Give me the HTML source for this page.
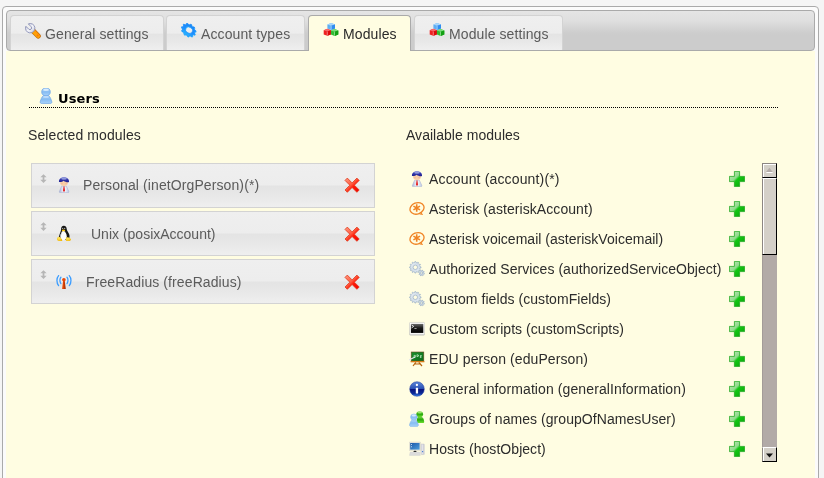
<!DOCTYPE html>
<html>
<head>
<meta charset="utf-8">
<title>LDAP Account Manager</title>
<style>
html,body{margin:0;padding:0;}
#page{position:absolute;left:0;top:0;width:824px;height:478px;overflow:hidden;will-change:transform;}
body{width:824px;height:478px;overflow:hidden;background:#f5f5f5;position:relative;font-family:"Liberation Sans",Arial,sans-serif;font-size:14px;color:#2c2c2c;letter-spacing:.1px;}
#tabs{position:absolute;left:2px;top:6px;width:815px;height:520px;border:1px solid #aaa;border-radius:4px;background:#fbfbfb;}
#nav{position:absolute;left:6px;top:10px;width:807px;height:39px;border:1px solid #aaa;border-radius:4px;background:linear-gradient(#e5e5e5 0%,#dfdfdf 25%,#cecece 55%,#cccccc 62%,#cccccc 100%);}
#panel{position:absolute;left:6px;top:51px;width:809px;height:480px;background:#fffde2;}
.tab{position:absolute;top:15px;height:35px;box-sizing:border-box;border:1px solid #d3d3d3;border-bottom:0;border-radius:4px 4px 0 0;background:linear-gradient(#efefef 0%,#ededed 50%,#e4e4e4 54%,#e8e8e8 75%,#efefef 100%);color:#5b5b5b;white-space:nowrap;}
.tab.active{background:#fffde2;border-color:#aaa;color:#2a2a2a;height:36px;}
.tab svg{position:absolute;left:14px;top:7px;width:16px;height:16px;}
.tab span{position:absolute;left:34px;top:10px;line-height:16px;}
.hdr{position:absolute;left:58px;top:91px;font:bold 13px "DejaVu Sans",Verdana,sans-serif;line-height:16px;color:#000;}
.hdric{position:absolute;left:38px;top:88px;width:16px;height:16px;}
.dots{position:absolute;left:29px;top:107px;width:749px;height:1px;background:repeating-linear-gradient(90deg,#000 0,#000 1px,transparent 1px,transparent 2px);}
.lbl{position:absolute;top:127px;line-height:16px;color:#2c2c2c;}
.sel{position:absolute;left:31px;width:344px;height:45px;box-sizing:border-box;border:1px solid #d3d3d3;background:linear-gradient(#efefef 0%,#ededed 48%,#e4e4e4 52%,#e8e8e8 75%,#efefef 100%);color:#5b5b5b;}
.sel .t{position:absolute;top:13px;line-height:16px;white-space:nowrap;}
.sel svg.ic{position:absolute;left:24px;top:13px;width:16px;height:16px;}
.sel svg.del{position:absolute;left:312px;top:13px;width:16px;height:16px;}
.sel svg.mv{position:absolute;left:7.5px;top:9.6px;width:7px;height:9.2px;}
.row{position:absolute;left:409px;height:16px;line-height:16px;white-space:nowrap;color:#2c2c2c;}
.row svg{position:absolute;left:0;top:0;width:16px;height:16px;}
.row span{position:absolute;left:20px;top:0;}
.row svg.add{left:320px;}
#sb{position:absolute;left:762px;top:163px;width:15px;height:299px;background:#b2aaa7;box-shadow:inset 1px 0 0 #a39b98;}
#sb div{position:absolute;left:0;width:15px;box-sizing:border-box;background:#d4d0c8;border:1px solid #000;border-left-color:#8c8682;border-top-color:#8c8682;box-shadow:inset 1px 1px 0 #fff;}
#sb svg{position:absolute;left:0;top:0;width:15px;height:15px;}
</style>
</head>
<body>
<div id="page">

<svg width="0" height="0" style="position:absolute">
<defs>
<linearGradient id="g-silver" x1="0" y1="0" x2="1" y2="1"><stop offset="0" stop-color="#b9bdd6"/><stop offset=".5" stop-color="#f4f5fa"/><stop offset="1" stop-color="#c4c8dc"/></linearGradient>
<linearGradient id="g-orange" x1="0" y1="1" x2="1" y2="0"><stop offset="0" stop-color="#ffb400"/><stop offset="1" stop-color="#ff8a10"/></linearGradient>
<linearGradient id="g-bluegear" x1="0" y1="0" x2="0" y2="1"><stop offset="0" stop-color="#1c86f4"/><stop offset=".6" stop-color="#1e90ff"/><stop offset="1" stop-color="#2cc0ff"/></linearGradient>
<linearGradient id="g-cb" x1="0" y1="0" x2="0" y2="1"><stop offset="0" stop-color="#9ed0fa"/><stop offset=".35" stop-color="#5aacf2"/><stop offset="1" stop-color="#2a86ee"/></linearGradient>
<linearGradient id="g-cr" x1="0" y1="0" x2="0" y2="1"><stop offset="0" stop-color="#f46060"/><stop offset=".35" stop-color="#ec1a1a"/><stop offset="1" stop-color="#d80808"/></linearGradient>
<linearGradient id="g-cg" x1="0" y1="0" x2="0" y2="1"><stop offset="0" stop-color="#70d870"/><stop offset=".35" stop-color="#2cb82c"/><stop offset="1" stop-color="#109810"/></linearGradient>
<linearGradient id="g-user" x1="0" y1="0" x2="0" y2="1"><stop offset="0" stop-color="#bcdcfa"/><stop offset=".5" stop-color="#86bcf2"/><stop offset="1" stop-color="#a8d2fa"/></linearGradient>
<linearGradient id="g-userg" x1="0" y1="0" x2="0" y2="1"><stop offset="0" stop-color="#7ad84a"/><stop offset=".5" stop-color="#28a80c"/><stop offset="1" stop-color="#6ee030"/></linearGradient>
<linearGradient id="g-hair" x1="0" y1="0" x2="0" y2="1"><stop offset="0" stop-color="#6a74d0"/><stop offset=".45" stop-color="#3236aa"/><stop offset="1" stop-color="#20208e"/></linearGradient>
<linearGradient id="g-shirt" x1="0" y1="0" x2="1" y2="0"><stop offset="0" stop-color="#a8b0d4"/><stop offset=".35" stop-color="#e4e8f4"/><stop offset=".65" stop-color="#e8f0f8"/><stop offset="1" stop-color="#b8c4e0"/></linearGradient>
<linearGradient id="g-x" x1="0" y1="0" x2="1" y2="1"><stop offset="0" stop-color="#ff9a80"/><stop offset=".45" stop-color="#ff5a40"/><stop offset=".6" stop-color="#ff1a08"/><stop offset="1" stop-color="#f00000"/></linearGradient>
<linearGradient id="g-plus" x1="0" y1="0" x2="1" y2="1"><stop offset="0" stop-color="#c4ecbc"/><stop offset=".42" stop-color="#90da8c"/><stop offset=".52" stop-color="#14c814"/><stop offset="1" stop-color="#0c9c0c"/></linearGradient>
<linearGradient id="g-gear" x1="0" y1="0" x2="1" y2="1"><stop offset="0" stop-color="#eef3f8"/><stop offset=".5" stop-color="#d2dde9"/><stop offset="1" stop-color="#e6edf4"/></linearGradient>
<linearGradient id="g-scr" x1="0" y1="0" x2="0" y2="1"><stop offset="0" stop-color="#6a6a6a"/><stop offset=".45" stop-color="#1a1a1a"/><stop offset="1" stop-color="#000"/></linearGradient>
<linearGradient id="g-frame" x1="0" y1="0" x2="0" y2="1"><stop offset="0" stop-color="#f4f4f4"/><stop offset="1" stop-color="#d4d4d4"/></linearGradient>
<linearGradient id="g-board" x1="0" y1="0" x2="1" y2="1"><stop offset="0" stop-color="#18902c"/><stop offset="1" stop-color="#0c6a1c"/></linearGradient>
<linearGradient id="g-info" x1="0" y1="0" x2="0" y2="1"><stop offset="0" stop-color="#5a86d8"/><stop offset=".48" stop-color="#2a50b4"/><stop offset=".52" stop-color="#08127c"/><stop offset=".8" stop-color="#0c2a98"/><stop offset="1" stop-color="#3c8cf0"/></linearGradient>
<linearGradient id="g-mon" x1="0" y1="0" x2="1" y2="1"><stop offset="0" stop-color="#1c58a8"/><stop offset="1" stop-color="#4c9cdc"/></linearGradient>
<linearGradient id="g-tower" x1="0" y1="0" x2="1" y2="0"><stop offset="0" stop-color="#e8e8ee"/><stop offset=".5" stop-color="#c4c4cc"/><stop offset="1" stop-color="#e0e0e6"/></linearGradient>
<linearGradient id="g-ant" x1="0" y1="0" x2="1" y2="0"><stop offset="0" stop-color="#f05a10"/><stop offset=".5" stop-color="#d83c00"/><stop offset="1" stop-color="#8a2400"/></linearGradient>
<radialGradient id="g-foot" cx=".4" cy=".3" r=".8"><stop offset="0" stop-color="#ffe860"/><stop offset="1" stop-color="#f0b000"/></radialGradient>


</defs>
</svg>

<div id="tabs"></div><div id="nav"></div><div id="panel"></div>
<div class="tab" style="left:10px;width:154px;"><svg viewBox="0 0 16 16"><line x1="8.4" y1="8.2" x2="13.2" y2="13" stroke="#c46c08" stroke-width="5.2" stroke-linecap="round"/>
<line x1="8.4" y1="8.2" x2="13.2" y2="13" stroke="url(#g-orange)" stroke-width="3.8" stroke-linecap="round"/>
<circle cx="12.6" cy="12.6" r="1" fill="#ff7a00"/>
<path d="M3.3 .9A4.7 4.7 0 1 1 .9 3.3L3.79 6.19A1.7 1.7 0 0 0 6.19 3.79Z" fill="url(#g-silver)" stroke="#8a90b6" stroke-width=".9" stroke-linejoin="round"/></svg><span>General settings</span></div>
<div class="tab" style="left:166px;width:139px;"><svg viewBox="0 0 16 16"><g transform="translate(7.9 7.6) rotate(35) scale(1 .8)"><path d="M6.42 -1.02 L7.67 -0.68 L7.67 0.68 L6.42 1.02 L5.95 2.62 L6.82 3.57 L6.08 4.72 L4.85 4.33 L3.59 5.42 L3.81 6.69 L2.57 7.26 L1.74 6.26 L0.09 6.50 L-0.42 7.69 L-1.77 7.49 L-1.92 6.21 L-3.44 5.52 L-4.51 6.24 L-5.54 5.35 L-4.97 4.19 L-5.87 2.78 L-7.17 2.81 L-7.55 1.51 L-6.45 0.83 L-6.45 -0.83 L-7.55 -1.51 L-7.17 -2.81 L-5.87 -2.78 L-4.97 -4.19 L-5.54 -5.35 L-4.51 -6.24 L-3.44 -5.52 L-1.92 -6.21 L-1.77 -7.49 L-0.42 -7.69 L0.09 -6.50 L1.74 -6.26 L2.57 -7.26 L3.81 -6.69 L3.59 -5.42 L4.85 -4.33 L6.08 -4.72 L6.82 -3.57 L5.95 -2.62ZM-3.60 -0.40 a3.90 3.90 0 1 0 7.80 0 a3.90 3.90 0 1 0 -7.80 0Z" fill="#38b8ff" fill-rule="evenodd" stroke="#38b8ff" stroke-width=".6" stroke-linejoin="round"/></g>
<g transform="translate(7.5 7) rotate(35) scale(1 .8)"><path d="M6.42 -1.02 L7.67 -0.68 L7.67 0.68 L6.42 1.02 L5.95 2.62 L6.82 3.57 L6.08 4.72 L4.85 4.33 L3.59 5.42 L3.81 6.69 L2.57 7.26 L1.74 6.26 L0.09 6.50 L-0.42 7.69 L-1.77 7.49 L-1.92 6.21 L-3.44 5.52 L-4.51 6.24 L-5.54 5.35 L-4.97 4.19 L-5.87 2.78 L-7.17 2.81 L-7.55 1.51 L-6.45 0.83 L-6.45 -0.83 L-7.55 -1.51 L-7.17 -2.81 L-5.87 -2.78 L-4.97 -4.19 L-5.54 -5.35 L-4.51 -6.24 L-3.44 -5.52 L-1.92 -6.21 L-1.77 -7.49 L-0.42 -7.69 L0.09 -6.50 L1.74 -6.26 L2.57 -7.26 L3.81 -6.69 L3.59 -5.42 L4.85 -4.33 L6.08 -4.72 L6.82 -3.57 L5.95 -2.62ZM-3.60 -0.40 a3.90 3.90 0 1 0 7.80 0 a3.90 3.90 0 1 0 -7.80 0Z" fill="url(#g-bluegear)" fill-rule="evenodd" stroke="#1e8cfa" stroke-width=".6" stroke-linejoin="round"/></g></svg><span>Account types</span></div>
<div class="tab active" style="left:308px;width:103px;"><svg viewBox="0 0 16 16"><path d="M8.2 0L12.0 1.4000000000000001V5.6L8.2 7L4.3999999999999995 5.6V1.4000000000000001Z" fill="#5eaef3"/><path d="M8.2 0L12.0 1.4000000000000001L8.2 2.8000000000000003L4.3999999999999995 1.4000000000000001Z" fill="#a8d6fb"/><path d="M8.2 2.8000000000000003L12.0 1.4000000000000001V5.6L8.2 7Z" fill="#2f8cf0"/><path d="M8.2 2.8000000000000003V6.7" stroke="#d8ecff" stroke-width=".7" opacity=".8"/><path d="M4.3 5.8L7.9 7.2V11.4L4.3 12.8L0.6999999999999997 11.4V7.2Z" fill="#ee2222"/><path d="M4.3 5.8L7.9 7.2L4.3 8.6L0.6999999999999997 7.2Z" fill="#f66a6a"/><path d="M4.3 8.6L7.9 7.2V11.4L4.3 12.8Z" fill="#dc0a0a"/><path d="M4.3 8.6V12.5" stroke="#ffd0d0" stroke-width=".7" opacity=".8"/><path d="M11.6 6L15.3 7.4V11.6L11.6 13L7.8999999999999995 11.6V7.4Z" fill="#34bc34"/><path d="M11.6 6L15.3 7.4L11.6 8.8L7.8999999999999995 7.4Z" fill="#7adc7a"/><path d="M11.6 8.8L15.3 7.4V11.6L11.6 13Z" fill="#14a014"/><path d="M11.6 8.8V12.7" stroke="#d8ffd8" stroke-width=".7" opacity=".8"/></svg><span>Modules</span></div>
<div class="tab" style="left:414px;width:149px;"><svg viewBox="0 0 16 16"><path d="M8.2 0L12.0 1.4000000000000001V5.6L8.2 7L4.3999999999999995 5.6V1.4000000000000001Z" fill="#5eaef3"/><path d="M8.2 0L12.0 1.4000000000000001L8.2 2.8000000000000003L4.3999999999999995 1.4000000000000001Z" fill="#a8d6fb"/><path d="M8.2 2.8000000000000003L12.0 1.4000000000000001V5.6L8.2 7Z" fill="#2f8cf0"/><path d="M8.2 2.8000000000000003V6.7" stroke="#d8ecff" stroke-width=".7" opacity=".8"/><path d="M4.3 5.8L7.9 7.2V11.4L4.3 12.8L0.6999999999999997 11.4V7.2Z" fill="#ee2222"/><path d="M4.3 5.8L7.9 7.2L4.3 8.6L0.6999999999999997 7.2Z" fill="#f66a6a"/><path d="M4.3 8.6L7.9 7.2V11.4L4.3 12.8Z" fill="#dc0a0a"/><path d="M4.3 8.6V12.5" stroke="#ffd0d0" stroke-width=".7" opacity=".8"/><path d="M11.6 6L15.3 7.4V11.6L11.6 13L7.8999999999999995 11.6V7.4Z" fill="#34bc34"/><path d="M11.6 6L15.3 7.4L11.6 8.8L7.8999999999999995 7.4Z" fill="#7adc7a"/><path d="M11.6 8.8L15.3 7.4V11.6L11.6 13Z" fill="#14a014"/><path d="M11.6 8.8V12.7" stroke="#d8ffd8" stroke-width=".7" opacity=".8"/></svg><span>Module settings</span></div>
<svg class="hdric" viewBox="0 0 16 16"><path d="M8 6.8C5.5 6.8 4.2 8.6 3.4 10.4C2.6 12.2 2 13.6 2.2 14.4C2.4 15.4 3.2 15.6 4.2 15.6H11.8C12.8 15.6 13.6 15.4 13.8 14.4C14 13.6 13.4 12.2 12.6 10.4C11.8 8.6 10.5 6.8 8 6.8Z" fill="url(#g-user)" stroke="#6aa4e6" stroke-width=".7"/>
<ellipse cx="8" cy="3.9" rx="4.3" ry="3.8" fill="url(#g-user)" stroke="#6aa4e6" stroke-width=".7"/>
<ellipse cx="8" cy="1.9" rx="2.8" ry="1.1" fill="#e4f2fe" opacity=".8"/>
<ellipse cx="8" cy="9" rx="3" ry="1" fill="#d4e8fc" opacity=".6"/></svg><div class="hdr">Users</div><div class="dots"></div>
<div class="lbl" style="left:28px;">Selected modules</div><div class="lbl" style="left:406px;letter-spacing:.03px;">Available modules</div>
<div class="sel" style="top:163px;"><svg class="mv" viewBox="0 0 8 10"><path d="M4 0L7.6 3.6H5V6.4H7.6L4 10L.4 6.4H3V3.6H.4Z" fill="#b6b6b6"/></svg><svg class="ic" viewBox="0 0 16 16"><path d="M5.6 9.2L3.4 14.4C3.2 15.2 3.5 15.6 4.3 15.6H11.9C12.7 15.6 13 15.2 12.8 14.4L10.4 9.2Z" fill="url(#g-shirt)" stroke="#a4acd0" stroke-width=".5"/>
<path d="M7.6 9.2H8.4L9 13.4L8 15.2L7 13.4Z" fill="#e62424"/>
<ellipse cx="8" cy="5.1" rx="4.1" ry="3.9" fill="#f8cfa8"/>
<ellipse cx="6" cy="6.6" rx="1" ry=".6" fill="#f4a890" opacity=".6"/><ellipse cx="10" cy="6.6" rx="1" ry=".6" fill="#f4a890" opacity=".6"/>
<path d="M3 5C2.6 1.9 5 .2 8 .2C11 .2 13.4 1.9 13 5C11.6 5.6 9.4 5.2 7.6 3.8C6.8 4.6 5 5.2 3 5Z" fill="url(#g-hair)"/>
<ellipse cx="8" cy="1.7" rx="2.8" ry="1" fill="#a4acE4" opacity=".8"/></svg><span class="t" style="left:51px;top:13px;">Personal (inetOrgPerson)(*)</span><svg class="del" style="top:13px;" viewBox="0 0 16 16"><path transform="translate(0 .4)" d="M3.3 .7L8.1 5.5L12.9 .7L15.2 3L10.4 7.8L15.2 12.6L12.9 14.9L8.1 10.1L3.3 14.9L1 12.6L5.8 7.8L1 3Z" fill="url(#g-x)" stroke="#e03a1c" stroke-width=".8" stroke-linejoin="round"/></svg></div>
<div class="sel" style="top:211px;"><svg class="mv" viewBox="0 0 8 10"><path d="M4 0L7.6 3.6H5V6.4H7.6L4 10L.4 6.4H3V3.6H.4Z" fill="#b6b6b6"/></svg><svg class="ic" viewBox="0 0 16 16"><path d="M7.8 .8C9.7 .8 10.7 2.2 10.7 4C10.7 5.6 12.8 7.6 13.4 10C13.8 12 13.2 14 12.2 15H3.8C2.8 14 2.6 12 3.4 10C4.2 7.6 5.1 6 5.1 4C5.1 2.2 5.9 .8 7.8 .8Z" fill="#161616"/>
<path d="M7.4 5.6C5.6 6.6 4.2 9.6 4.3 12C4.4 14 5.6 15.2 7.4 15.2C9.4 15.2 10.8 14 10.8 11.6C10.8 9.2 9.4 6.6 7.4 5.6Z" fill="#fcfcfc"/>
<path d="M4.3 12C4.3 10 5 8 6 6.8L5.4 9.6Z" fill="#c8c8c8"/>
<ellipse cx="7.5" cy="5.4" rx="1.7" ry=".95" fill="#f4c010"/>
<ellipse cx="6.7" cy="3.4" rx=".55" ry=".7" fill="#c8c8c8"/><ellipse cx="8.7" cy="3.4" rx=".55" ry=".7" fill="#c8c8c8"/>
<path d="M1 13.4C1.6 11.6 3.2 11.4 4.4 12.4C5.6 13.4 6.4 14.6 6.2 15.6C6 16.6 4 16.4 2.6 16C1.2 15.6 .6 14.6 1 13.4Z" fill="url(#g-foot)"/>
<path d="M9.8 13.4C10.2 12 11.6 11.8 12.8 12.6C14 13.4 15.2 14 15 14.8C14.6 15.8 13 16.4 11.4 16.4C10 16.4 9.6 15 9.8 13.4Z" fill="url(#g-foot)"/></svg><span class="t" style="left:59px;top:14px;letter-spacing:0;">Unix (posixAccount)</span><svg class="del" style="top:14px;" viewBox="0 0 16 16"><path transform="translate(0 .4)" d="M3.3 .7L8.1 5.5L12.9 .7L15.2 3L10.4 7.8L15.2 12.6L12.9 14.9L8.1 10.1L3.3 14.9L1 12.6L5.8 7.8L1 3Z" fill="url(#g-x)" stroke="#e03a1c" stroke-width=".8" stroke-linejoin="round"/></svg></div>
<div class="sel" style="top:259px;"><svg class="mv" viewBox="0 0 8 10"><path d="M4 0L7.6 3.6H5V6.4H7.6L4 10L.4 6.4H3V3.6H.4Z" fill="#b6b6b6"/></svg><svg class="ic" viewBox="0 0 16 16"><path d="M7.1 7.6L6 16.4H9.8L8.7 7.6Z" fill="url(#g-ant)"/>
<circle cx="7.9" cy="6.8" r="1.8" fill="#e84808"/>
<g fill="none" stroke="#3a9cff" stroke-width="1.3" stroke-linecap="round">
<path d="M4.9 4.2C3.6 5.6 3.6 9 4.9 10.6"/><path d="M2.6 2.6C.4 5 .4 10 2.6 12.6"/>
<path d="M11 4.2C12.3 5.6 12.3 9 11 10.6"/><path d="M13.3 2.6C15.5 5 15.5 10 13.3 12.6"/>
</g></svg><span class="t" style="left:54px;top:14px;">FreeRadius (freeRadius)</span><svg class="del" style="top:14px;" viewBox="0 0 16 16"><path transform="translate(0 .4)" d="M3.3 .7L8.1 5.5L12.9 .7L15.2 3L10.4 7.8L15.2 12.6L12.9 14.9L8.1 10.1L3.3 14.9L1 12.6L5.8 7.8L1 3Z" fill="url(#g-x)" stroke="#e03a1c" stroke-width=".8" stroke-linejoin="round"/></svg></div>
<div class="row" style="top:171px;"><svg viewBox="0 0 16 16"><path d="M5.6 9.2L3.4 14.4C3.2 15.2 3.5 15.6 4.3 15.6H11.9C12.7 15.6 13 15.2 12.8 14.4L10.4 9.2Z" fill="url(#g-shirt)" stroke="#a4acd0" stroke-width=".5"/>
<path d="M7.6 9.2H8.4L9 13.4L8 15.2L7 13.4Z" fill="#e62424"/>
<ellipse cx="8" cy="5.1" rx="4.1" ry="3.9" fill="#f8cfa8"/>
<ellipse cx="6" cy="6.6" rx="1" ry=".6" fill="#f4a890" opacity=".6"/><ellipse cx="10" cy="6.6" rx="1" ry=".6" fill="#f4a890" opacity=".6"/>
<path d="M3 5C2.6 1.9 5 .2 8 .2C11 .2 13.4 1.9 13 5C11.6 5.6 9.4 5.2 7.6 3.8C6.8 4.6 5 5.2 3 5Z" fill="url(#g-hair)"/>
<ellipse cx="8" cy="1.7" rx="2.8" ry="1" fill="#a4acE4" opacity=".8"/></svg><span style="letter-spacing:0.15px">Account (account)(*)</span><svg class="add" viewBox="0 0 16 16"><path d="M5.4 .4H10.6V5.4H15.6V10.6H10.6V15.6H5.4V10.6H.4V5.4H5.4Z" fill="url(#g-plus)" stroke="#22a822" stroke-width=".8" stroke-linejoin="round"/></svg></div>
<div class="row" style="top:201px;"><svg viewBox="0 0 16 16"><g fill="none" stroke="#f08424" stroke-linecap="round">
<ellipse cx="8" cy="7.4" rx="7.2" ry="5.6" transform="rotate(-22 8 7.4)" stroke-width="1.3"/>
<path d="M12 12L13.6 13.4L11 13" stroke-width="1"/>
<path d="M7.7 3.2V10.8M4.4 5.1L11 8.9M4.4 8.9L11 5.1" stroke-width="1.6" stroke-linecap="butt"/>
</g></svg><span style="letter-spacing:0.07px">Asterisk (asteriskAccount)</span><svg class="add" viewBox="0 0 16 16"><path d="M5.4 .4H10.6V5.4H15.6V10.6H10.6V15.6H5.4V10.6H.4V5.4H5.4Z" fill="url(#g-plus)" stroke="#22a822" stroke-width=".8" stroke-linejoin="round"/></svg></div>
<div class="row" style="top:231px;"><svg viewBox="0 0 16 16"><g fill="none" stroke="#f08424" stroke-linecap="round">
<ellipse cx="8" cy="7.4" rx="7.2" ry="5.6" transform="rotate(-22 8 7.4)" stroke-width="1.3"/>
<path d="M12 12L13.6 13.4L11 13" stroke-width="1"/>
<path d="M7.7 3.2V10.8M4.4 5.1L11 8.9M4.4 8.9L11 5.1" stroke-width="1.6" stroke-linecap="butt"/>
</g></svg><span style="letter-spacing:0.02px">Asterisk voicemail (asteriskVoicemail)</span><svg class="add" viewBox="0 0 16 16"><path d="M5.4 .4H10.6V5.4H15.6V10.6H10.6V15.6H5.4V10.6H.4V5.4H5.4Z" fill="url(#g-plus)" stroke="#22a822" stroke-width=".8" stroke-linejoin="round"/></svg></div>
<div class="row" style="top:261px;"><svg viewBox="0 0 16 16"><path d="M11.06 5.67 L12.09 5.91 L12.09 6.69 L11.06 6.93 L10.73 8.14 L11.51 8.85 L11.11 9.53 L10.11 9.22 L9.22 10.11 L9.53 11.11 L8.85 11.51 L8.14 10.73 L6.93 11.06 L6.69 12.09 L5.91 12.09 L5.67 11.06 L4.46 10.73 L3.75 11.51 L3.07 11.11 L3.38 10.11 L2.49 9.22 L1.49 9.53 L1.09 8.85 L1.87 8.14 L1.54 6.93 L0.51 6.69 L0.51 5.91 L1.54 5.67 L1.87 4.46 L1.09 3.75 L1.49 3.07 L2.49 3.38 L3.38 2.49 L3.07 1.49 L3.75 1.09 L4.46 1.87 L5.67 1.54 L5.91 0.51 L6.69 0.51 L6.93 1.54 L8.14 1.87 L8.85 1.09 L9.53 1.49 L9.22 2.49 L10.11 3.38 L11.11 3.07 L11.51 3.75 L10.73 4.46ZM4.10 6.30 a2.20 2.20 0 1 0 4.40 0 a2.20 2.20 0 1 0 -4.40 0Z" fill="url(#g-gear)" fill-rule="evenodd" stroke="#8fa6c0" stroke-width=".6"/>
<path d="M14.79 12.23 L15.44 12.57 L15.27 13.13 L14.53 13.05 L13.99 13.71 L14.21 14.41 L13.68 14.69 L13.23 14.11 L12.37 14.19 L12.03 14.84 L11.47 14.67 L11.55 13.93 L10.89 13.39 L10.19 13.61 L9.91 13.08 L10.49 12.63 L10.41 11.77 L9.76 11.43 L9.93 10.87 L10.67 10.95 L11.21 10.29 L10.99 9.59 L11.52 9.31 L11.97 9.89 L12.83 9.81 L13.17 9.16 L13.73 9.33 L13.65 10.07 L14.31 10.61 L15.01 10.39 L15.29 10.92 L14.71 11.37ZM11.50 12.00 a1.10 1.10 0 1 0 2.20 0 a1.10 1.10 0 1 0 -2.20 0Z" fill="url(#g-gear)" fill-rule="evenodd" stroke="#8fa6c0" stroke-width=".6"/></svg><span style="letter-spacing:0.05px">Authorized Services (authorizedServiceObject)</span><svg class="add" viewBox="0 0 16 16"><path d="M5.4 .4H10.6V5.4H15.6V10.6H10.6V15.6H5.4V10.6H.4V5.4H5.4Z" fill="url(#g-plus)" stroke="#22a822" stroke-width=".8" stroke-linejoin="round"/></svg></div>
<div class="row" style="top:291px;"><svg viewBox="0 0 16 16"><path d="M11.06 5.67 L12.09 5.91 L12.09 6.69 L11.06 6.93 L10.73 8.14 L11.51 8.85 L11.11 9.53 L10.11 9.22 L9.22 10.11 L9.53 11.11 L8.85 11.51 L8.14 10.73 L6.93 11.06 L6.69 12.09 L5.91 12.09 L5.67 11.06 L4.46 10.73 L3.75 11.51 L3.07 11.11 L3.38 10.11 L2.49 9.22 L1.49 9.53 L1.09 8.85 L1.87 8.14 L1.54 6.93 L0.51 6.69 L0.51 5.91 L1.54 5.67 L1.87 4.46 L1.09 3.75 L1.49 3.07 L2.49 3.38 L3.38 2.49 L3.07 1.49 L3.75 1.09 L4.46 1.87 L5.67 1.54 L5.91 0.51 L6.69 0.51 L6.93 1.54 L8.14 1.87 L8.85 1.09 L9.53 1.49 L9.22 2.49 L10.11 3.38 L11.11 3.07 L11.51 3.75 L10.73 4.46ZM4.10 6.30 a2.20 2.20 0 1 0 4.40 0 a2.20 2.20 0 1 0 -4.40 0Z" fill="url(#g-gear)" fill-rule="evenodd" stroke="#8fa6c0" stroke-width=".6"/>
<path d="M14.79 12.23 L15.44 12.57 L15.27 13.13 L14.53 13.05 L13.99 13.71 L14.21 14.41 L13.68 14.69 L13.23 14.11 L12.37 14.19 L12.03 14.84 L11.47 14.67 L11.55 13.93 L10.89 13.39 L10.19 13.61 L9.91 13.08 L10.49 12.63 L10.41 11.77 L9.76 11.43 L9.93 10.87 L10.67 10.95 L11.21 10.29 L10.99 9.59 L11.52 9.31 L11.97 9.89 L12.83 9.81 L13.17 9.16 L13.73 9.33 L13.65 10.07 L14.31 10.61 L15.01 10.39 L15.29 10.92 L14.71 11.37ZM11.50 12.00 a1.10 1.10 0 1 0 2.20 0 a1.10 1.10 0 1 0 -2.20 0Z" fill="url(#g-gear)" fill-rule="evenodd" stroke="#8fa6c0" stroke-width=".6"/></svg><span style="letter-spacing:0.055px">Custom fields (customFields)</span><svg class="add" viewBox="0 0 16 16"><path d="M5.4 .4H10.6V5.4H15.6V10.6H10.6V15.6H5.4V10.6H.4V5.4H5.4Z" fill="url(#g-plus)" stroke="#22a822" stroke-width=".8" stroke-linejoin="round"/></svg></div>
<div class="row" style="top:321px;"><svg viewBox="0 0 16 16"><rect x=".4" y="1.4" width="15.3" height="12.9" rx="1.2" fill="url(#g-frame)" stroke="#c8c8c0" stroke-width=".6"/>
<rect x="1.5" y="2.5" width="13.2" height="9.8" fill="none" stroke="#fff" stroke-width=".8"/>
<rect x="1.9" y="2.9" width="12.4" height="9" fill="url(#g-scr)"/>
<path d="M2.6 3.9L4.7 5.4L2.6 6.9" fill="none" stroke="#f0f0f0" stroke-width=".9"/>
<rect x="5.4" y="7.2" width="2.2" height=".8" fill="#bbb"/></svg><span style="letter-spacing:0.04px">Custom scripts (customScripts)</span><svg class="add" viewBox="0 0 16 16"><path d="M5.4 .4H10.6V5.4H15.6V10.6H10.6V15.6H5.4V10.6H.4V5.4H5.4Z" fill="url(#g-plus)" stroke="#22a822" stroke-width=".8" stroke-linejoin="round"/></svg></div>
<div class="row" style="top:351px;"><svg viewBox="0 0 16 16"><rect x="2.2" y="1" width="12.6" height="9" fill="url(#g-board)" stroke="#6a4a20" stroke-width=".6"/>
<rect x="1.6" y="10" width="13.8" height="1.3" fill="#d87c18"/>
<path d="M6.8 11.3L4 15M9.8 11.3L13 15M5 13H12" stroke="#b8640c" stroke-width="1.2" fill="none"/>
<path d="M5 4.4H6.4V6.2H5ZM8 3.6L10 4.6L8 5.8ZM11.2 4.6H12.8M11.2 6H12.8M11.4 4.6V7" stroke="#c8f0c8" stroke-width=".7" fill="none"/>
<path d="M.2 8.8L5.6 6.2" stroke="#e4e4ec" stroke-width="1.2" stroke-linecap="round"/></svg><span style="letter-spacing:0.085px">EDU person (eduPerson)</span><svg class="add" viewBox="0 0 16 16"><path d="M5.4 .4H10.6V5.4H15.6V10.6H10.6V15.6H5.4V10.6H.4V5.4H5.4Z" fill="url(#g-plus)" stroke="#22a822" stroke-width=".8" stroke-linejoin="round"/></svg></div>
<div class="row" style="top:381px;"><svg viewBox="0 0 16 16"><circle cx="8" cy="8" r="7.3" fill="url(#g-info)" stroke="#20389c" stroke-width=".5"/>
<circle cx="7.9" cy="4" r="1.15" fill="#fff"/>
<rect x="6.8" y="6.7" width="2.3" height="5.9" rx=".4" fill="#fff"/></svg><span style="letter-spacing:0.1px">General information (generalInformation)</span><svg class="add" viewBox="0 0 16 16"><path d="M5.4 .4H10.6V5.4H15.6V10.6H10.6V15.6H5.4V10.6H.4V5.4H5.4Z" fill="url(#g-plus)" stroke="#22a822" stroke-width=".8" stroke-linejoin="round"/></svg></div>
<div class="row" style="top:411px;"><svg viewBox="0 0 16 16"><path d="M10.7 5.4C9 5.4 8.2 6.6 7.9 8L7.6 10.8C7.5 11.6 8 12 8.8 12H14C14.8 12 15.3 11.6 15.2 10.8L14.6 8C14.2 6.6 12.6 5.4 10.7 5.4Z" fill="url(#g-userg)"/>
<ellipse cx="10.7" cy="3.2" rx="3.4" ry="3" fill="url(#g-userg)"/>
<ellipse cx="10.7" cy="1.5" rx="2.2" ry=".9" fill="#b8f088" opacity=".7"/>
<path d="M4.9 8.4C3 8.4 2 9.8 1.4 11.2C.8 12.6 .4 13.6 .5 14.2C.6 15.2 1.2 15.4 2 15.4H7.8C8.6 15.4 9.3 15.2 9.4 14.2C9.5 13.6 9 12.6 8.4 11.2C7.8 9.8 6.8 8.4 4.9 8.4Z" fill="url(#g-user)" stroke="#78aeea" stroke-width=".5"/>
<ellipse cx="4.9" cy="6.1" rx="3.3" ry="3.1" fill="url(#g-user)" stroke="#78aeea" stroke-width=".5"/>
<ellipse cx="4.9" cy="4.5" rx="2.1" ry=".9" fill="#e4f2fe" opacity=".8"/></svg><span style="letter-spacing:0.05px">Groups of names (groupOfNamesUser)</span><svg class="add" viewBox="0 0 16 16"><path d="M5.4 .4H10.6V5.4H15.6V10.6H10.6V15.6H5.4V10.6H.4V5.4H5.4Z" fill="url(#g-plus)" stroke="#22a822" stroke-width=".8" stroke-linejoin="round"/></svg></div>
<div class="row" style="top:441px;"><svg viewBox="0 0 16 16"><rect x="11.8" y="3" width="3.6" height="10.6" rx=".5" fill="url(#g-tower)" stroke="#c0c0c8" stroke-width=".4"/>
<rect x="13.3" y="3.4" width=".6" height="9.6" fill="#f6f6fa"/>
<rect x="13.1" y="10" width="1" height="1.2" fill="#3a78d0"/>
<rect x=".2" y="1" width="11.4" height="8.6" rx=".6" fill="#e6e4dc" stroke="#d0ccc0" stroke-width=".4"/>
<rect x="1.2" y="2" width="9.4" height="6.6" fill="url(#g-mon)"/>
<rect x="2" y="3.2" width="1" height=".8" fill="#e8f0fa"/><rect x="2" y="5.4" width="1" height=".8" fill="#e8f0fa"/>
<ellipse cx="6" cy="10.4" rx="1.6" ry=".7" fill="#111"/>
<path d="M1.2 11H10.6L11.4 14.4H.4Z" fill="#dcdcdc" stroke="#c8c8c8" stroke-width=".3"/></svg><span style="letter-spacing:0.05px">Hosts (hostObject)</span><svg class="add" viewBox="0 0 16 16"><path d="M5.4 .4H10.6V5.4H15.6V10.6H10.6V15.6H5.4V10.6H.4V5.4H5.4Z" fill="url(#g-plus)" stroke="#22a822" stroke-width=".8" stroke-linejoin="round"/></svg></div>
<div id="sb"><div style="top:0;height:15px;"><svg viewBox="0 0 15 15"><path d="M3.4 8H9.6V9H3.4Z" fill="#fff"/><path d="M6.4 3.8L9.7 8H3.1Z" fill="#b4aca8"/></svg></div><div style="top:15px;height:77px;border-top-color:#fff;box-shadow:inset 1px 0 0 #fff;"></div><div style="top:284px;height:15px;border-top-color:#fff;box-shadow:inset 1px 0 0 #fff;"><svg viewBox="0 0 15 15"><path d="M3 5.6H10L6.5 9.4Z" fill="#111"/></svg></div></div>
</div>
</body>
</html>
